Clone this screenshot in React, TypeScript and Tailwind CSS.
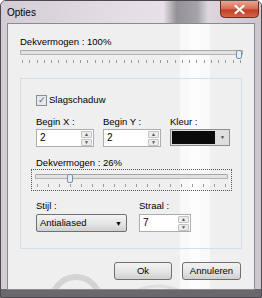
import React from "react";

const font = { fontFamily: '"Segoe UI", "Liberation Sans", Arial, sans-serif' };

function Ticks({ count }: { count: number }) {
  return (
    <div className="flex justify-between">
      {Array.from({ length: count }).map((_, i) => (
        <span key={i} className="block h-[3px] w-px bg-[#9a9a9a]" />
      ))}
    </div>
  );
}

function Slider({ value, ticks }: { value: number; ticks: number }) {
  return (
    <div className="relative h-[15px]">
      <div className="mt-[2px] h-[5px] rounded-[1px] border border-[#b4b4b4] border-t-[#a8a8a8] bg-[#e2e2e2]" />
      <div
        className="absolute top-0 -ml-[3px] h-[9px] w-[6px] rounded-[2px] border border-[#7a8ea3] bg-[#e4eef8]"
        style={{ left: value + "%" }}
      />
      <div className="mt-[5px] px-[2px]">
        <Ticks count={ticks} />
      </div>
    </div>
  );
}

function Spin({ value, width }: { value: string; width: string }) {
  return (
    <div className={["flex h-[18px] items-stretch border border-[#abadb3] bg-white", width].join(" ")}>
      <span className="flex-1 pl-[3px] text-[10px] leading-[16px] text-black">{value}</span>
      <div className="m-px flex w-[11px] flex-col gap-px">
        <div className="flex flex-1 items-center justify-center rounded-[1px] border border-[#c3c3c3] bg-[#ececec] text-[5px] leading-none text-[#555]">▲</div>
        <div className="flex flex-1 items-center justify-center rounded-[1px] border border-[#c3c3c3] bg-[#ececec] text-[5px] leading-none text-[#555]">▼</div>
      </div>
    </div>
  );
}

function Button({ children, width }: { children: React.ReactNode; width: string }) {
  return (
    <div
      className={[
        "flex h-[18px] items-center justify-center rounded-[3px] border border-[#707070] bg-[#e4e4e4] bg-linear-to-b from-[#f3f3f3] via-[#e6e6e6] to-[#d0d0d0] text-[9.5px] text-black",
        width,
      ].join(" ")}
    >
      {children}
    </div>
  );
}

function CloseButton() {
  return (
    <svg width="39" height="17" viewBox="0 0 39 17" className="block shrink-0">
      <defs>
        <linearGradient id="closeRed" x1="0" y1="0" x2="0" y2="1">
          <stop offset="0" stopColor="#eaa390" />
          <stop offset="0.45" stopColor="#d8705a" />
          <stop offset="0.55" stopColor="#c23f20" />
          <stop offset="1" stopColor="#d36a4e" />
        </linearGradient>
      </defs>
      <path d="M0.5 0 V12.5 Q0.5 16.5 4.5 16.5 H34.5 Q38.5 16.5 38.5 12.5 V0" fill="url(#closeRed)" stroke="#6e2a22" />
      <path d="M15.5 5 L23.5 12 M23.5 5 L15.5 12" stroke="#ffffff" strokeWidth="2.2" strokeLinecap="round" />
    </svg>
  );
}

export default function App() {
  return (
    <div
      style={font}
      className="relative h-[298px] w-[262px] overflow-hidden rounded-t-[6px] border border-[#4c4a4e] bg-[#ddd7de]"
    >
      <svg className="absolute left-0 top-0" width="262" height="298" viewBox="0 0 262 298">
        <defs>
          <linearGradient id="glass" x1="0" y1="0" x2="1" y2="0">
            <stop offset="0" stopColor="#d3ccd4" />
            <stop offset="0.4" stopColor="#e2dbe3" />
            <stop offset="0.62" stopColor="#e6e0e7" />
            <stop offset="0.67" stopColor="#939195" />
            <stop offset="0.75" stopColor="#a6a4a8" />
            <stop offset="0.79" stopColor="#dcd7de" />
            <stop offset="1" stopColor="#cbc4cd" />
          </linearGradient>
        </defs>
        <rect x="0" y="0" width="262" height="298" fill="url(#glass)" />
        <rect x="0" y="288" width="262" height="10" fill="#6a686c" />
      </svg>

      <div className="relative flex h-[22px] items-start justify-between">
        <span className="pl-[6px] pt-[6px] text-[10px] leading-[12px] text-black">Opties</span>
        <div className="mr-[2px]">
          <CloseButton />
        </div>
      </div>

      <div className="relative ml-[6px] h-[267px] w-[248px] overflow-hidden border border-[#8c8a8e] bg-[#efefef] text-black">
        <svg className="absolute left-0 top-0" width="248" height="267" viewBox="0 0 248 267">
          <rect x="172" y="0" width="30" height="267" fill="#f9f9f9" />
          <rect x="182" y="0" width="10" height="267" fill="#fdfdfd" />
          <circle cx="68" cy="277" r="24" fill="none" stroke="#d4d4d4" strokeWidth="6" />
          <circle cx="150" cy="310" r="48" fill="none" stroke="#dedede" strokeWidth="3" />
        </svg>

        <div className="relative px-[12px] pt-[12px]">
          <div className="text-[9.5px] leading-[12px]">Dekvermogen : 100%</div>
          <div className="-mr-px mt-[2px]">
            <Slider value={98} ticks={31} />
          </div>

          <div className="mt-[13px] h-[171px] w-[222px] border border-[#d5dfe5] px-[15px] pt-[15px]">
            <div className="flex items-center gap-[2px]">
              <div className="flex h-[11px] w-[11px] items-center justify-center border border-[#8f8f8f] bg-[#e8e8e8] text-[9px] leading-none text-[#3a6aa8]">
                ✓
              </div>
              <span className="text-[9.5px] leading-[12px]">Slagschaduw</span>
            </div>

            <div className="mt-[10px] flex gap-[9px]">
              <div className="flex flex-col gap-[1px]">
                <span className="text-[9.5px] leading-[12px]">Begin X :</span>
                <Spin value="2" width="w-[58px]" />
              </div>
              <div className="flex flex-col gap-[1px]">
                <span className="text-[9.5px] leading-[12px]">Begin Y :</span>
                <Spin value="2" width="w-[58px]" />
              </div>
              <div className="flex flex-col gap-[1px]">
                <span className="text-[9.5px] leading-[12px]">Kleur :</span>
                <div className="flex h-[17px] w-[60px] border border-[#8f8f8f] bg-[#dcdcdc]">
                  <div className="m-px flex-1 bg-[#0a0a0a]" />
                  <div className="flex w-[13px] items-center justify-center bg-[#dedede] text-[5px] text-[#444]">▼</div>
                </div>
              </div>
            </div>

            <div className="mt-[10px] text-[9.5px] leading-[12px]">Dekvermogen : 26%</div>
            <div className="-ml-[5px] w-[201px] border border-dotted border-[#555] px-[3px] pt-[2px] pb-px">
              <Slider value={18} ticks={18} />
            </div>

            <div className="mt-[9px] flex gap-[12px]">
              <div className="flex flex-col gap-[2px]">
                <span className="text-[9.5px] leading-[12px]">Stijl :</span>
                <div className="flex h-[18px] w-[91px] items-center justify-between rounded-[2px] border border-[#707070] bg-[#e4e4e4] bg-linear-to-b from-[#f3f3f3] via-[#e6e6e6] to-[#d0d0d0] pl-[3px] pr-[4px] text-[9.5px]">
                  <span>Antialiased</span>
                  <span className="text-[7px] leading-none">▼</span>
                </div>
              </div>
              <div className="flex flex-col gap-[2px]">
                <span className="text-[9.5px] leading-[12px]">Straal :</span>
                <Spin value="7" width="w-[52px]" />
              </div>
            </div>
          </div>

          <div className="mt-[13px] flex justify-end gap-[10px] pr-[1px]">
            <Button width="w-[58px]">Ok</Button>
            <Button width="w-[59px]">Annuleren</Button>
          </div>
        </div>
      </div>
    </div>
  );
}
